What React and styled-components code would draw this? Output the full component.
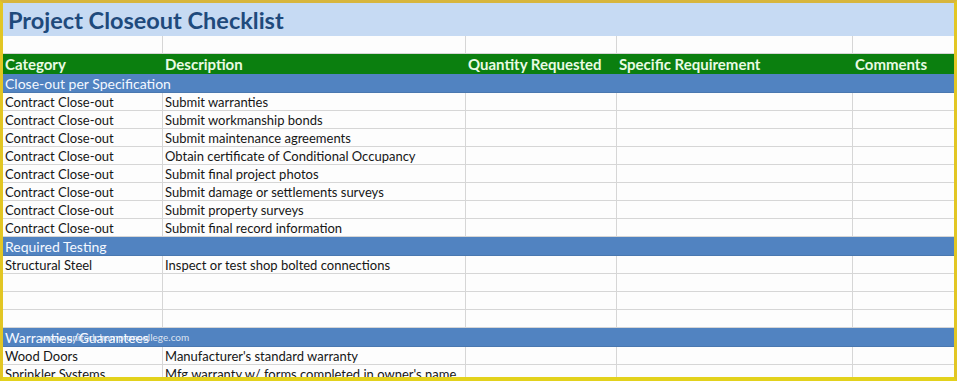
import React from "react";
import styled, { createGlobalStyle } from "styled-components";

const GlobalStyle = createGlobalStyle`
  html, body {
    margin: 0;
    padding: 0;
    background: #ffffff;
  }
`;

const COLS = "160px 303px 151px 236px 101px";

const rows = [
  { section: "Close-out per Specification" },
  { cat: "Contract Close-out", desc: "Submit warranties" },
  { cat: "Contract Close-out", desc: "Submit workmanship bonds" },
  { cat: "Contract Close-out", desc: "Submit maintenance agreements" },
  { cat: "Contract Close-out", desc: "Obtain certificate of Conditional Occupancy" },
  { cat: "Contract Close-out", desc: "Submit final project photos" },
  { cat: "Contract Close-out", desc: "Submit damage or settlements surveys" },
  { cat: "Contract Close-out", desc: "Submit property surveys" },
  { cat: "Contract Close-out", desc: "Submit final record information" },
  { section: "Required Testing" },
  { cat: "Structural Steel", desc: "Inspect or test shop bolted connections" },
  { cat: "", desc: "" },
  { cat: "", desc: "" },
  { cat: "", desc: "" },
  { section: "Warranties/Guarantees", watermark: "www.unitedchampioncollege.com" },
  { cat: "Wood Doors", desc: "Manufacturer's standard warranty" },
  { cat: "Sprinkler Systems", desc: "Mfg warranty w/ forms completed in owner's name" },
];

export default function App() {
  return (
    <>
      <GlobalStyle />
      <Frame>
        <TitleBand>
          <Title>Project Closeout Checklist</Title>
        </TitleBand>
        <Row>
          <Cell />
          <Cell />
          <Cell />
          <Cell />
          <Cell $last />
        </Row>
        <HeaderRow>
          <HeadCell>Category</HeadCell>
          <HeadCell>Description</HeadCell>
          <HeadCell>Quantity Requested</HeadCell>
          <HeadCell>Specific Requirement</HeadCell>
          <HeadCell>Comments</HeadCell>
        </HeaderRow>
        {rows.map((r, i) =>
          r.section ? (
            <SectionRow key={i}>
              {r.section}
              {r.watermark && <Watermark>{r.watermark}</Watermark>}
            </SectionRow>
          ) : (
            <Row key={i}>
              <Cell>{r.cat}</Cell>
              <Cell>{r.desc}</Cell>
              <Cell />
              <Cell />
              <Cell $last />
            </Row>
          )
        )}
      </Frame>
    </>
  );
}

const Frame = styled.div`
  width: 957px;
  height: 381px;
  box-sizing: border-box;
  overflow: hidden;
  border-top: 3px solid #d7b53c;
  border-left: 3px solid #e2c624;
  border-right: 3px solid #e2c624;
  border-bottom: 4px solid #e3d21c;
  background: #fdfdfd;
  font-family: "Lato", "Liberation Sans", sans-serif;
`;

const TitleBand = styled.div`
  height: 33px;
  background: #c6daf3;
  display: flex;
  align-items: center;
  padding-left: 5px;
`;

const Title = styled.h1`
  margin: 0;
  font-size: 23.5px;
  font-weight: 700;
  color: #1f4a7c;
`;

const Row = styled.div`
  display: grid;
  grid-template-columns: ${COLS};
  height: 18px;
  box-sizing: border-box;
  border-bottom: 1px solid #d6d6d6;
`;

const Cell = styled.div`
  padding-left: 2px;
  font-size: 13px;
  line-height: 19px;
  color: #161616;
  white-space: nowrap;
  overflow: hidden;
  border-right: ${(p) => (p.$last ? "none" : "1px solid #d6d6d6")};
`;

const HeaderRow = styled.div`
  display: grid;
  grid-template-columns: ${COLS};
  height: 20px;
  background: #0b7f0f;
`;

const HeadCell = styled.div`
  padding-left: 2px;
  font-size: 15px;
  font-weight: 700;
  line-height: 21px;
  color: #e9fbe3;
  white-space: nowrap;
`;

const SectionRow = styled.div`
  position: relative;
  height: 19px;
  box-sizing: border-box;
  background: #5183c1;
  border-bottom: 1px solid #4a78b0;
  padding-left: 2px;
  font-size: 14px;
  line-height: 19px;
  color: #f4f8ff;
  white-space: nowrap;
`;

const Watermark = styled.span`
  position: absolute;
  left: 38px;
  top: 3px;
  font-size: 10px;
  line-height: 12px;
  color: rgba(255, 255, 255, 0.8);
`;
